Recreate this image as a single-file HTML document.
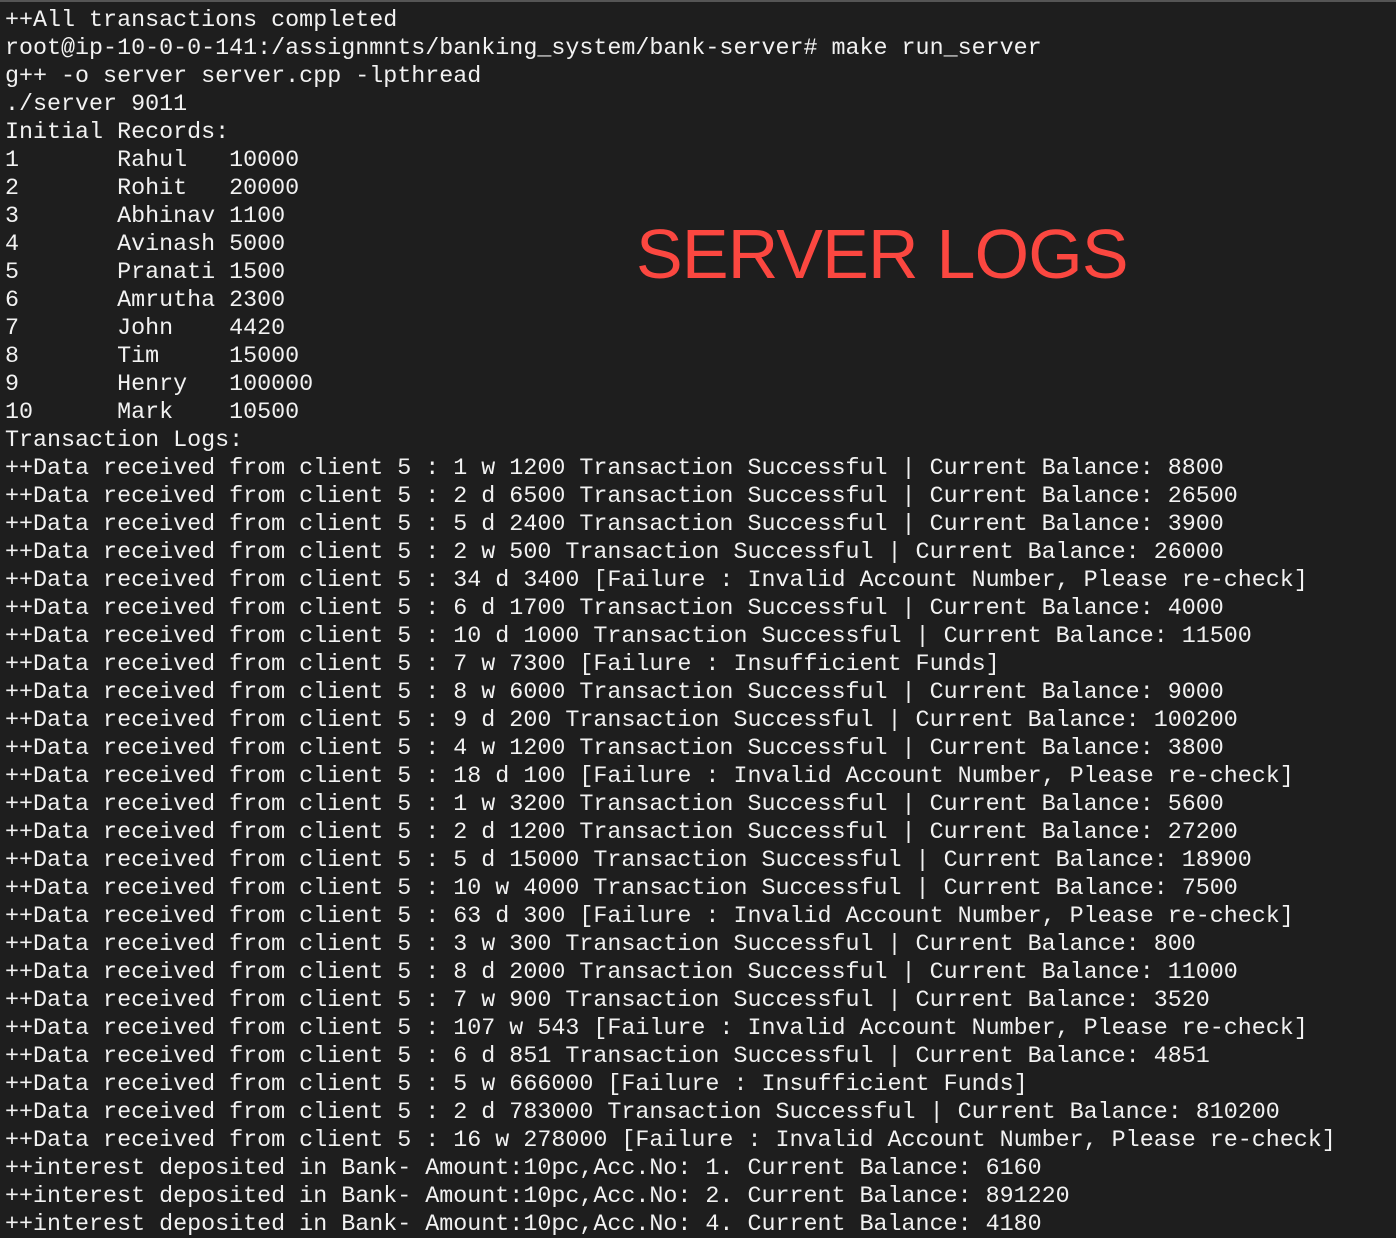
<!DOCTYPE html>
<html><head><meta charset="utf-8"><style>
html,body{margin:0;padding:0;background:#1e1e1e;width:1396px;height:1238px;overflow:hidden}
body{border-top:2px solid #555;box-sizing:border-box;position:relative}
pre{margin:0;position:absolute;left:5px;top:5px;font-family:"Liberation Mono",monospace;font-size:23.35px;line-height:28px;color:#f2f2f2;tab-size:8;-moz-tab-size:8;white-space:pre}
.t{position:absolute;left:636px;top:212px;font-family:"Liberation Sans",sans-serif;font-size:70px;line-height:80px;color:#fb4740;letter-spacing:-0.8px}
</style></head><body>
<pre>++All transactions completed
root@ip-10-0-0-141:/assignmnts/banking_system/bank-server# make run_server
g++ -o server server.cpp -lpthread
./server 9011
Initial Records:
1	Rahul	10000
2	Rohit	20000
3	Abhinav	1100
4	Avinash	5000
5	Pranati	1500
6	Amrutha	2300
7	John	4420
8	Tim	15000
9	Henry	100000
10	Mark	10500
Transaction Logs:
++Data received from client 5 : 1 w 1200 Transaction Successful | Current Balance: 8800
++Data received from client 5 : 2 d 6500 Transaction Successful | Current Balance: 26500
++Data received from client 5 : 5 d 2400 Transaction Successful | Current Balance: 3900
++Data received from client 5 : 2 w 500 Transaction Successful | Current Balance: 26000
++Data received from client 5 : 34 d 3400 [Failure : Invalid Account Number, Please re-check]
++Data received from client 5 : 6 d 1700 Transaction Successful | Current Balance: 4000
++Data received from client 5 : 10 d 1000 Transaction Successful | Current Balance: 11500
++Data received from client 5 : 7 w 7300 [Failure : Insufficient Funds]
++Data received from client 5 : 8 w 6000 Transaction Successful | Current Balance: 9000
++Data received from client 5 : 9 d 200 Transaction Successful | Current Balance: 100200
++Data received from client 5 : 4 w 1200 Transaction Successful | Current Balance: 3800
++Data received from client 5 : 18 d 100 [Failure : Invalid Account Number, Please re-check]
++Data received from client 5 : 1 w 3200 Transaction Successful | Current Balance: 5600
++Data received from client 5 : 2 d 1200 Transaction Successful | Current Balance: 27200
++Data received from client 5 : 5 d 15000 Transaction Successful | Current Balance: 18900
++Data received from client 5 : 10 w 4000 Transaction Successful | Current Balance: 7500
++Data received from client 5 : 63 d 300 [Failure : Invalid Account Number, Please re-check]
++Data received from client 5 : 3 w 300 Transaction Successful | Current Balance: 800
++Data received from client 5 : 8 d 2000 Transaction Successful | Current Balance: 11000
++Data received from client 5 : 7 w 900 Transaction Successful | Current Balance: 3520
++Data received from client 5 : 107 w 543 [Failure : Invalid Account Number, Please re-check]
++Data received from client 5 : 6 d 851 Transaction Successful | Current Balance: 4851
++Data received from client 5 : 5 w 666000 [Failure : Insufficient Funds]
++Data received from client 5 : 2 d 783000 Transaction Successful | Current Balance: 810200
++Data received from client 5 : 16 w 278000 [Failure : Invalid Account Number, Please re-check]
++interest deposited in Bank- Amount:10pc,Acc.No: 1. Current Balance: 6160
++interest deposited in Bank- Amount:10pc,Acc.No: 2. Current Balance: 891220
++interest deposited in Bank- Amount:10pc,Acc.No: 4. Current Balance: 4180</pre>
<div class="t">SERVER LOGS</div>
</body></html>
